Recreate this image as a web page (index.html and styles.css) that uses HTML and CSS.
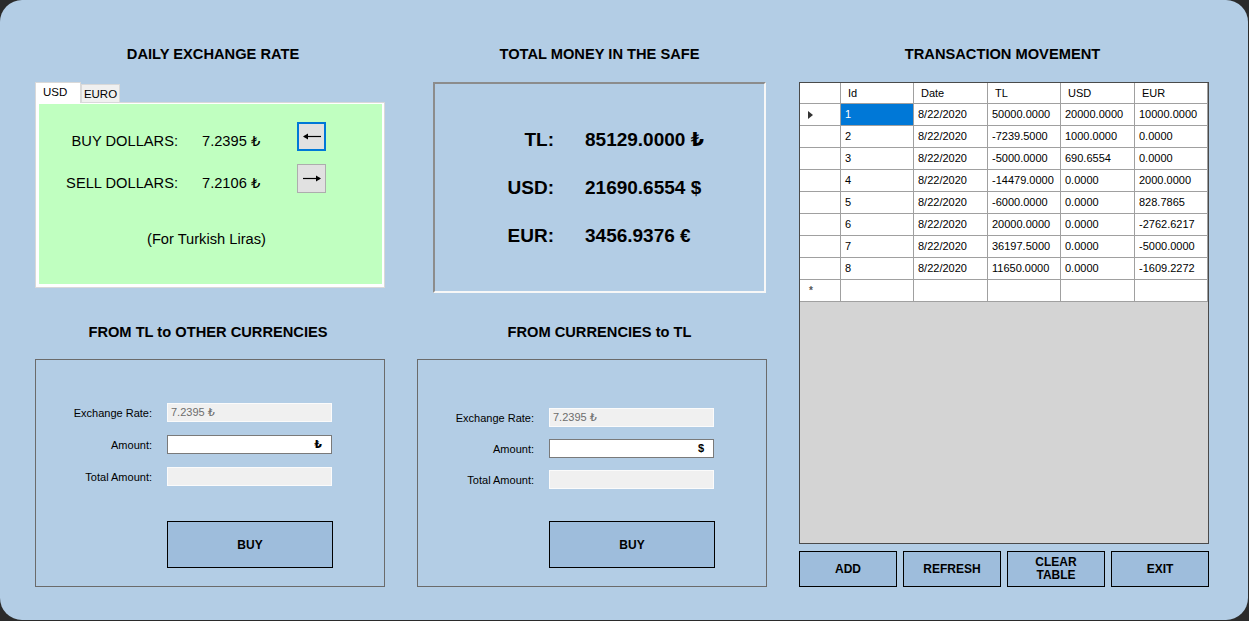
FILE: index.html
```html
<!DOCTYPE html>
<html lang="en">
<head>
<meta charset="utf-8">
<title>Exchange Office</title>
<link rel="stylesheet" href="styles.css">
</head>
<body>
<div class="window">

  <section class="col col-left">
    <h2 class="title title-rates">DAILY EXCHANGE RATE</h2>
    <div class="tabs">
      <div class="tab-strip">
        <div class="tab tab-active">USD</div>
        <div class="tab tab-idle">EURO</div>
      </div>
      <div class="tab-page">
        <div class="green">
          <div class="rate-grid">
            <span class="rate-label">BUY DOLLARS:</span>
            <span class="rate-value">7.2395 ₺</span>
            <button class="arrow arrow-focus" type="button" aria-label="buy">
              <svg width="20" height="9" viewBox="0 0 20 9"><path d="M2 4.5H19" stroke="#000" stroke-width="1.2" fill="none"/><path d="M1 4.5L6 1.5V7.5Z" fill="#000"/></svg>
            </button>
            <span class="rate-label">SELL DOLLARS:</span>
            <span class="rate-value">7.2106 ₺</span>
            <button class="arrow" type="button" aria-label="sell">
              <svg width="20" height="9" viewBox="0 0 20 9"><path d="M1 4.5H18" stroke="#000" stroke-width="1.2" fill="none"/><path d="M19 4.5L14 1.5V7.5Z" fill="#000"/></svg>
            </button>
          </div>
          <p class="note">(For Turkish Liras)</p>
        </div>
      </div>
    </div>

    <h2 class="title title-from-tl">FROM TL to OTHER CURRENCIES</h2>
    <div class="panel panel-a">
      <div class="form form-a">
        <span class="form-label">Exchange Rate:</span>
        <div class="box box-ro">7.2395 ₺</div>
        <span class="form-label">Amount:</span>
        <div class="box box-edit"><span class="sym">₺</span></div>
        <span class="form-label">Total Amount:</span>
        <div class="box box-ro"></div>
      </div>
      <button class="btn btn-buy btn-buy-a" type="button">BUY</button>
    </div>
  </section>

  <section class="col col-mid">
    <h2 class="title title-safe">TOTAL MONEY IN THE SAFE</h2>
    <div class="safe">
      <div class="safe-grid">
        <span class="safe-label">TL:</span><span class="safe-value">85129.0000 ₺</span>
        <span class="safe-label">USD:</span><span class="safe-value">21690.6554 $</span>
        <span class="safe-label">EUR:</span><span class="safe-value">3456.9376 €</span>
      </div>
    </div>

    <h2 class="title title-to-tl">FROM CURRENCIES to TL</h2>
    <div class="panel panel-b">
      <div class="form form-b">
        <span class="form-label">Exchange Rate:</span>
        <div class="box box-ro">7.2395 ₺</div>
        <span class="form-label">Amount:</span>
        <div class="box box-edit"><span class="sym">$</span></div>
        <span class="form-label">Total Amount:</span>
        <div class="box box-ro"></div>
      </div>
      <button class="btn btn-buy btn-buy-b" type="button">BUY</button>
    </div>
  </section>

  <section class="col col-right">
    <h2 class="title title-moves">TRANSACTION MOVEMENT</h2>
    <div class="grid">
      <div class="dg-row dg-head">
        <div class="dg-cell dg-rh"></div>
        <div class="dg-cell">Id</div>
        <div class="dg-cell">Date</div>
        <div class="dg-cell">TL</div>
        <div class="dg-cell">USD</div>
        <div class="dg-cell">EUR</div>
      </div>
      <div class="dg-row">
        <div class="dg-cell dg-rh"><span class="cur-mark"></span></div>
        <div class="dg-cell dg-sel">1</div>
        <div class="dg-cell">8/22/2020</div>
        <div class="dg-cell">50000.0000</div>
        <div class="dg-cell">20000.0000</div>
        <div class="dg-cell">10000.0000</div>
      </div>
      <div class="dg-row">
        <div class="dg-cell dg-rh"></div>
        <div class="dg-cell">2</div>
        <div class="dg-cell">8/22/2020</div>
        <div class="dg-cell">-7239.5000</div>
        <div class="dg-cell">1000.0000</div>
        <div class="dg-cell">0.0000</div>
      </div>
      <div class="dg-row">
        <div class="dg-cell dg-rh"></div>
        <div class="dg-cell">3</div>
        <div class="dg-cell">8/22/2020</div>
        <div class="dg-cell">-5000.0000</div>
        <div class="dg-cell">690.6554</div>
        <div class="dg-cell">0.0000</div>
      </div>
      <div class="dg-row">
        <div class="dg-cell dg-rh"></div>
        <div class="dg-cell">4</div>
        <div class="dg-cell">8/22/2020</div>
        <div class="dg-cell">-14479.0000</div>
        <div class="dg-cell">0.0000</div>
        <div class="dg-cell">2000.0000</div>
      </div>
      <div class="dg-row">
        <div class="dg-cell dg-rh"></div>
        <div class="dg-cell">5</div>
        <div class="dg-cell">8/22/2020</div>
        <div class="dg-cell">-6000.0000</div>
        <div class="dg-cell">0.0000</div>
        <div class="dg-cell">828.7865</div>
      </div>
      <div class="dg-row">
        <div class="dg-cell dg-rh"></div>
        <div class="dg-cell">6</div>
        <div class="dg-cell">8/22/2020</div>
        <div class="dg-cell">20000.0000</div>
        <div class="dg-cell">0.0000</div>
        <div class="dg-cell">-2762.6217</div>
      </div>
      <div class="dg-row">
        <div class="dg-cell dg-rh"></div>
        <div class="dg-cell">7</div>
        <div class="dg-cell">8/22/2020</div>
        <div class="dg-cell">36197.5000</div>
        <div class="dg-cell">0.0000</div>
        <div class="dg-cell">-5000.0000</div>
      </div>
      <div class="dg-row">
        <div class="dg-cell dg-rh"></div>
        <div class="dg-cell">8</div>
        <div class="dg-cell">8/22/2020</div>
        <div class="dg-cell">11650.0000</div>
        <div class="dg-cell">0.0000</div>
        <div class="dg-cell">-1609.2272</div>
      </div>
      <div class="dg-row">
        <div class="dg-cell dg-rh dg-new">*</div>
        <div class="dg-cell"></div>
        <div class="dg-cell"></div>
        <div class="dg-cell"></div>
        <div class="dg-cell"></div>
        <div class="dg-cell"></div>
      </div>
    </div>
    <div class="actions">
      <button class="btn btn-action" type="button">ADD</button>
      <button class="btn btn-action" type="button">REFRESH</button>
      <button class="btn btn-action btn-two" type="button">CLEAR<br>TABLE</button>
      <button class="btn btn-action" type="button">EXIT</button>
    </div>
  </section>

</div>
</body>
</html>
```

FILE: styles.css
```css
* {
  box-sizing: border-box;
}

html,
body {
  margin: 0;
  padding: 0;
  background: #2b2b2b;
}

body {
  width: 1249px;
  height: 621px;
  overflow: hidden;
  font-family: "Liberation Sans", Arial, "DejaVu Sans", sans-serif;
  color: #000;
}

.window {
  width: 1248px;
  height: 620px;
  border-radius: 22px;
  background: #b3cde5;
  padding: 46px 0 0 35px;
  display: flex;
  gap: 32px;
}

.col {
  display: flex;
  flex-direction: column;
}

.col-left,
.col-mid {
  width: 350px;
}

.col-right {
  width: 410px;
}

.title {
  margin: 0;
  height: 16px;
  font-size: 14.67px;
  line-height: 16px;
  font-weight: bold;
  text-align: center;
  white-space: nowrap;
}

.title-rates {
  padding-left: 6px;
}

.title-from-tl {
  margin-top: 36px;
  padding-right: 4px;
}

.title-safe {
  padding-left: 15px;
}

.title-to-tl {
  margin-top: 31px;
  padding-left: 15px;
}

.title-moves {
  padding-right: 3px;
}

/* ---------- Tab control ---------- */
.tabs {
  margin-top: 20px;
}

.tab-strip {
  display: flex;
  align-items: flex-end;
  height: 20px;
}

.tab {
  font-size: 11.5px;
  border: 1px solid #d9d9d9;
  border-bottom: none;
  white-space: nowrap;
}

.tab-active {
  position: relative;
  z-index: 1;
  width: 46px;
  height: 21px;
  margin-bottom: -1px;
  background: #fff;
  padding-left: 7px;
  line-height: 19px;
}

.tab-idle {
  width: 39px;
  height: 18px;
  background: #f0f0f0;
  text-align: center;
  line-height: 19px;
}

.tab-page {
  height: 186px;
  border: 1px solid #d9d9d9;
  background: #fff;
  padding: 1px 2px 3px 3px;
}

.green {
  height: 100%;
  background: #c0ffc0;
  padding-top: 18px;
  font-size: 14.67px;
}

.rate-grid {
  display: grid;
  grid-template-columns: 139px 71px 29px;
  grid-auto-rows: 29px;
  column-gap: 24px;
  row-gap: 13px;
  align-items: start;
}

.rate-label {
  text-align: right;
  line-height: 17px;
  padding-top: 11px;
  white-space: nowrap;
}

.rate-value {
  line-height: 17px;
  padding-top: 11px;
  white-space: nowrap;
}

.arrow {
  width: 29px;
  height: 29px;
  padding: 0;
  margin: 0;
  background: #e1e1e1;
  border: 1px solid #adadad;
  display: flex;
  align-items: center;
  justify-content: center;
}

.arrow-focus {
  border: 2px solid #0078d7;
}

.note {
  margin: 38px 0 0 108px;
  line-height: 17px;
}

/* ---------- Safe totals ---------- */
.safe {
  margin: 20px 0 0 16px;
  width: 333px;
  height: 211px;
  border: 2px solid;
  border-color: #8c8c8c #f7f7f7 #f7f7f7 #8c8c8c;
  padding-top: 45px;
}

.safe-grid {
  display: grid;
  grid-template-columns: 119px auto;
  column-gap: 31px;
  row-gap: 26px;
  font-size: 19px;
  font-weight: bold;
  line-height: 22px;
}

.safe-label {
  text-align: right;
}

.safe-value {
  white-space: nowrap;
}

/* ---------- Conversion panels ---------- */
.panel {
  margin-top: 19px;
  height: 228px;
  border: 1px solid #6b6b6b;
  display: flex;
  flex-direction: column;
}

.panel-a {
  padding-top: 43px;
}

.panel-b {
  padding-top: 48px;
}

.form {
  display: grid;
  grid-template-columns: 116px 165px;
  grid-auto-rows: 19px;
  column-gap: 15px;
  align-items: center;
  font-size: 11px;
}

.form-a {
  row-gap: 13px;
}

.form-b {
  row-gap: 12px;
}

.form-label {
  text-align: right;
  white-space: nowrap;
}

.box {
  height: 19px;
  line-height: 17px;
  font-size: 11px;
  padding: 0 3px;
}

.box-ro {
  background: #f0f0f0;
  border: 1px solid #fbfbfb;
  color: #6d6d6d;
}

.box-edit {
  background: #fff;
  border: 1px solid #7a7a7a;
  text-align: right;
  padding-right: 9px;
}

.sym {
  font-weight: bold;
}

.btn {
  font-family: "Liberation Sans", Arial, sans-serif;
  font-size: 12px;
  font-weight: bold;
  color: #000;
  background: #9ebddc;
  border: 1px solid #000;
  padding: 0;
  margin: 0;
}

.btn-buy {
  margin-left: 131px;
  width: 166px;
  height: 47px;
}

.btn-buy-a {
  margin-top: 35px;
}

.btn-buy-b {
  margin-top: 32px;
}

/* ---------- Data grid ---------- */
.grid {
  margin-top: 20px;
  height: 462px;
  border: 1px solid #4a4a4a;
  background: #d4d4d4;
  font-size: 11px;
}

.dg-row {
  display: grid;
  grid-template-columns: 41px 73px 74px 73px 74px 73px;
  width: 408px;
  height: 22px;
  background: #fff;
}

.dg-head {
  height: 21px;
}

.dg-cell {
  border-right: 1px solid #a0a0a0;
  border-bottom: 1px solid #a0a0a0;
  padding-left: 4px;
  line-height: 21px;
  white-space: nowrap;
  overflow: hidden;
}

.dg-head .dg-cell {
  padding-left: 7px;
  line-height: 20px;
}

.dg-rh {
  display: flex;
  align-items: center;
  padding-left: 8px;
}

.dg-sel {
  background: #0078d7;
  color: #fff;
}

.cur-mark {
  width: 0;
  height: 0;
  border-top: 4px solid transparent;
  border-bottom: 4px solid transparent;
  border-left: 5px solid #333;
}

.dg-new {
  padding-left: 9px;
  color: #555;
  font-weight: bold;
  font-size: 10px;
}

.actions {
  margin-top: 7px;
  display: flex;
  gap: 6px;
}

.btn-action {
  width: 98px;
  height: 36px;
  line-height: 13px;
}
```
